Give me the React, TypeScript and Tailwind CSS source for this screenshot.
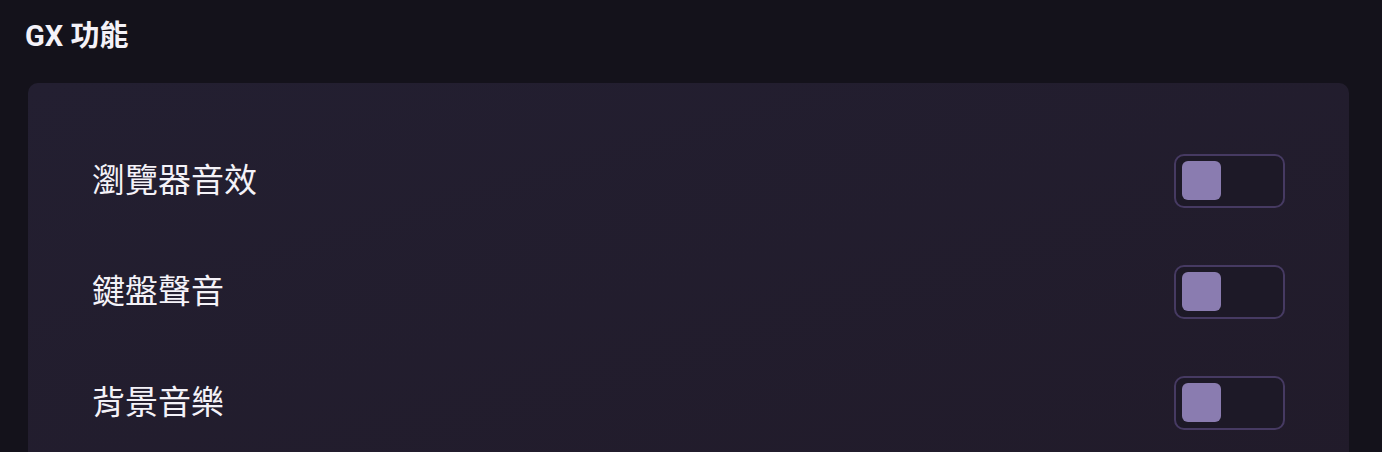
import React from "react";

const rows = ["瀏覽器音效", "鍵盤聲音", "背景音樂"];

function Toggle() {
  return (
    <div className="w-[111px] h-[54px] rounded-[10px] border-2 border-[#463a62] bg-[#1d1927] flex items-center px-[6px]">
      <div className="w-[39px] h-[39px] rounded-[6px] bg-[#8a7cb0]" />
    </div>
  );
}

export default function App() {
  return (
    <div
      className="w-[1382px] h-[452px] overflow-hidden bg-[#14121b] text-[#f4f2f8]"
      style={{ fontFamily: 'Roboto, "Noto Sans CJK TC", sans-serif' }}
    >
      <div className="pl-[25px] pt-[16px] h-[83px]">
        <h1 className="text-[29px] font-bold leading-[40px]">GX 功能</h1>
      </div>
      <div className="ml-[28px] w-[1321px] rounded-t-[10px] bg-gradient-to-br from-[#231f31] to-[#211b2a] pt-[42px] px-[64px] pb-[20px]">
        {rows.map((r) => (
          <div key={r} className="h-[111px] flex items-center justify-between">
            <span
              className="text-[33px] leading-none pb-[5px]"
              style={{ fontFamily: '"Noto Sans CJK TC", sans-serif' }}
            >
              {r}
            </span>
            <Toggle />
          </div>
        ))}
      </div>
    </div>
  );
}
